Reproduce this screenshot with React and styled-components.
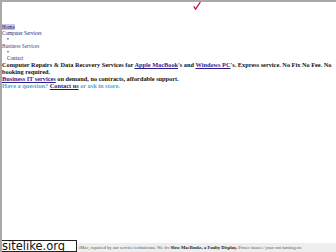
import React from 'react';
import styled, { createGlobalStyle } from 'styled-components';

const Global = createGlobalStyle`
    html, body {
        margin: 0;
        padding: 0;
        background: #fff;
    }
    body {
        font-family: "Liberation Serif", "Times New Roman", serif;
        width: 336px;
        height: 252px;
        overflow: hidden;
    }
`

const Page = styled.div`
    position: relative;
    box-sizing: border-box;
    width: 336px;
    height: 252px;
    border-top: 2px solid #a9a9a9;
    border-left: 2px solid #a9a9a9;
    display: flex;
    flex-direction: column;
    overflow: hidden;
`

const Header = styled.div`
    height: 22px;
    padding-left: 191px;
    line-height: 0;
`

const Nav = styled.ul`
    list-style: none;
    margin: 0;
    padding: 0;
    font-size: 5.2px;
    line-height: 6px;

    li.sub {
        padding-left: 5px;
    }
    .bullet {
        padding-left: 5px;
        color: #222;
        line-height: 6.5px;
    }
`

const NavLink = styled.a`
    color: ${p => p.$visited ? '#55407a' : '#1f1a6a'};
    background: ${p => p.$active ? '#c9c3ee' : 'transparent'};
    text-decoration: none;
`

const Intro = styled.div`
    font-size: 6.3px;
    line-height: 7px;
    font-weight: bold;
    color: #111;

    p {
        margin: 0;
    }
    a {
        color: #2c1d8f;
        text-decoration: underline;
    }
    .ask {
        color: #4aaed0;
    }
    .ask a {
        color: #2a1670;
    }
`

const Spacer = styled.div`
    flex: 1;
`

const Footer = styled.div`
    margin-left: 75px;
    height: 9px;
    background: #eeeeee;
    border-top-left-radius: 3px;
    font-size: 4.6px;
    line-height: 10px;
    color: #555;
    white-space: nowrap;
    overflow: hidden;
    padding-left: 2px;

    b {
        color: #222;
    }
`

const Badge = styled.div`
    position: absolute;
    left: -2px;
    bottom: 0;
    width: 77px;
    height: 12px;
    box-sizing: border-box;
    background: #fff;
    border: 1px solid #222;
    font-family: "DejaVu Sans", "Liberation Sans", sans-serif;
    font-size: 11.5px;
    line-height: 10px;
    color: #111;
    padding-left: 1px;
`

function Check() {
    return (
        <svg width="8" height="8" viewBox="0 0 8 8">
            <path d="M0.8 4.4 L2.6 7.2 L7.4 0" stroke="#c2184a" strokeWidth="1.3" fill="none" />
        </svg>
    )
}

export default function App() {
    return (
        <Page>
            <Global />
            <Header><Check /></Header>
            <Nav>
                <li><NavLink href="#" $active>Home</NavLink></li>
                <li><NavLink href="#">Computer Services</NavLink></li>
                <li className="bullet">•</li>
                <li><NavLink href="#" $visited>Business Services</NavLink></li>
                <li className="bullet">•</li>
                <li className="sub"><NavLink href="#">Contact</NavLink></li>
            </Nav>
            <Intro>
                <p>Computer Repairs &amp; Data Recovery Services for <a href="#">Apple MacBook</a>'s and <a href="#">Windows PC</a>'s. Express service. No Fix No Fee. No booking required.</p>
                <p><a href="#">Business IT services</a> on demand, no contracts, affordable support.</p>
                <p className="ask">Have a question? <a href="#">Contact us</a> or ask in store.</p>
            </Intro>
            <Spacer />
            <Footer>
                iMac, repaired by our service technicians. We fix <b>Slow MacBooks, a Faulty Display,</b> Power issues / your not turning on
            </Footer>
            <Badge>sitelike.org</Badge>
        </Page>
    )
}
